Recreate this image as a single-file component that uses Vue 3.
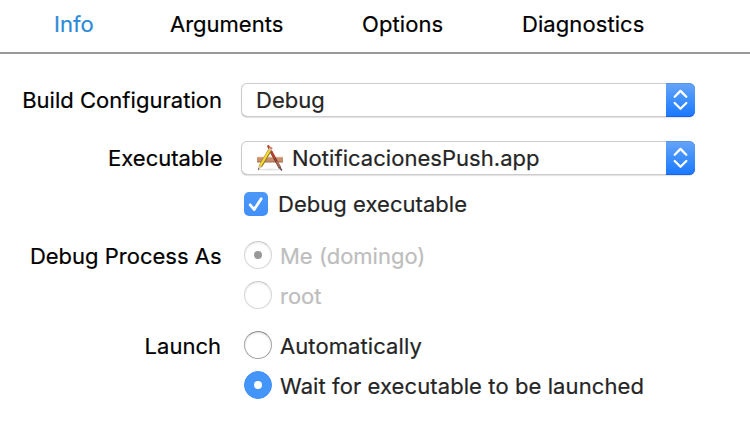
<script setup>
import { ref } from 'vue'

const tabs = ['Info', 'Arguments', 'Options', 'Diagnostics']
const active = ref('Info')
const debugExecutable = ref(true)
const launch = ref('wait')
</script>

<template>
  <main class="panel">
    <nav class="tabs">
      <a v-for="t in tabs" :key="t" class="tab" :class="[t.toLowerCase(), { active: active === t }]" @click="active = t">{{ t }}</a>
    </nav>

    <section class="form">
      <div class="row build">
        <span class="label">Build Configuration</span>
        <div class="select">
          <span class="value">Debug</span>
          <span class="stepper">
            <svg width="29" height="34" viewBox="0 0 29 34"><path d="M8.7 13.7 14.5 7.9 20.3 13.7M8.7 20 14.5 25.8 20.3 20" /></svg>
          </span>
        </div>
      </div>

      <div class="row exec">
        <span class="label">Executable</span>
        <div class="select">
          <svg class="app-icon" width="28" height="28" viewBox="0 0 28 28">
            <ellipse cx="14" cy="25.6" rx="12" ry="1" fill="#e4e4e4" />
            <rect x="1" y="12.9" width="26" height="5.4" fill="#c98f6d" />
            <path d="M1 13.4H27" stroke="#deb090" stroke-width="1" />
            <path d="M1 17.9H27" stroke="#a36c4e" stroke-width=".9" />
            <path d="M13 4 24 24" stroke="#853d30" stroke-width="2.6" />
            <path d="M12.3 2.3 18 12.8" stroke="#b9402d" stroke-width="2.4" stroke-linecap="round" />
            <path d="M20.6 17.5 24.3 24" stroke="#a8715f" stroke-width="1.7" />
            <path d="M23.3 23 25.9 26.4" stroke="#655550" stroke-width="1.7" />
            <path d="M14 6 4.4 22.4" stroke="#8a761d" stroke-width="3.6" />
            <path d="M13.7 6 4.1 22.2" stroke="#f6d935" stroke-width="2.3" />
            <path d="M14.8 4.4 13.6 6.4" stroke="#ccc4bc" stroke-width="3.4" />
            <path d="M15.3 3.2 14.6 4.4" stroke="#d86a5a" stroke-width="3.2" />
            <path d="M2.5 21.2 5.7 23.1 2 26.2Z" fill="#dfc3a0" />
            <path d="M2.3 23.9 3.5 24.7 1.9 26.4Z" fill="#4c4238" />
          </svg>
          <span class="value v-app">NotificacionesPush.app</span>
          <span class="stepper">
            <svg width="29" height="34" viewBox="0 0 29 34"><path d="M8.7 13.7 14.5 7.9 20.3 13.7M8.7 20 14.5 25.8 20.3 20" /></svg>
          </span>
        </div>
      </div>

      <div class="row check">
        <span class="label"></span>
        <div class="choice" @click="debugExecutable = !debugExecutable">
          <span class="checkbox">
            <svg v-if="debugExecutable" width="24" height="24" viewBox="0 0 24 24"><path d="M6.2 12.8 10.2 17.6 17.2 6.8" /></svg>
          </span>
          <span class="text v-check">Debug executable</span>
        </div>
      </div>

      <div class="row me">
        <span class="label">Debug Process As</span>
        <div class="choice disabled">
          <span class="radio selected"></span><span class="text">Me (domingo)</span>
        </div>
      </div>

      <div class="row root">
        <span class="label"></span>
        <div class="choice disabled">
          <span class="radio"></span><span class="text">root</span>
        </div>
      </div>

      <div class="row auto">
        <span class="label">Launch</span>
        <div class="choice" @click="launch = 'auto'">
          <span class="radio" :class="{ selected: launch === 'auto' }"></span><span class="text v-auto">Automatically</span>
        </div>
      </div>

      <div class="row wait">
        <span class="label"></span>
        <div class="choice" @click="launch = 'wait'">
          <span class="radio" :class="{ selected: launch === 'wait' }"></span><span class="text v-wait">Wait for executable to be launched</span>
        </div>
      </div>
    </section>
  </main>
</template>

<style>
body {
  margin: 0;
  background: #fff;
}
</style>

<style scoped>
.panel {
  box-sizing: border-box;
  width: 750px;
  height: 432px;
  overflow: hidden;
  background: #fff;
  color: #000;
  font: 22px/28px Inter, "Liberation Sans", sans-serif;
  -webkit-text-stroke: 0.2px currentColor;
  white-space: nowrap;
}
.tabs {
  display: flex;
  box-sizing: border-box;
  height: 54px;
  padding: 10px 0 0 54px;
  border-bottom: 2px solid #999;
}
.tab { flex: none; }
.tab.info { width: 116px; }
.tab.arguments { width: 192px; }
.tab.options { width: 160px; letter-spacing: 0.1px; }
.tab.diagnostics { letter-spacing: 0.08px; }
.tab.active { color: #2c8ad8; }
.form { padding-top: 29px; }
.row {
  display: grid;
  grid-template-columns: 223px 454px;
  column-gap: 18px;
  align-items: center;
  height: 34px;
}
.exec { margin-top: 24px; }
.check { margin-top: 12px; }
.me { margin-top: 17px; }
.root { margin-top: 6px; }
.auto { margin-top: 16px; }
.wait { margin-top: 6px; }
.label {
  padding-right: 1px;
  text-align: right;
}
.build .label { letter-spacing: 0.03px; }
.exec .label { padding-right: 0.5px; }
.me .label { padding: 2px 1.5px 0 0; }
.auto .label { padding: 2px 2px 0 0; }
.v-app, .v-check { letter-spacing: 0.04px; }
.v-auto, .v-wait { letter-spacing: 0.09px; }
.select {
  display: flex;
  align-items: center;
  box-sizing: border-box;
  height: 34px;
  padding-left: 15px;
  border-radius: 6px;
  background: #fff;
  box-shadow: inset 0 0 0 1px #ccc, inset 0 -1px 0 #b4b4b4, 0 1px 1px #e2e2e2;
  color: #252525;
}
.stepper {
  display: flex;
  width: 29px;
  height: 34px;
  margin-left: auto;
  border-radius: 0 6px 6px 0;
  background: linear-gradient(#68a4f8, #3d8ffb 50%, #1a78ff);
  box-shadow: inset 0 -1px 0 #1763f0, inset 0 1px 0 #5793ec;
}
.stepper path, .checkbox path {
  fill: none;
  stroke: #fff;
  stroke-width: 2.3;
  stroke-linecap: round;
  stroke-linejoin: round;
}
.app-icon { flex: none; margin-right: 8px; }
.choice {
  display: flex;
  align-items: center;
  padding-left: 3px;
  color: #252525;
}
.checkbox {
  display: flex;
  width: 24px;
  height: 24px;
  margin-right: 10px;
  border-radius: 5px;
  background: linear-gradient(#4b98f8, #4090f8);
}
.checkbox path { stroke-width: 2.8; }
.radio {
  display: grid;
  place-items: center;
  box-sizing: border-box;
  width: 28px;
  height: 28px;
  margin-right: 8px;
  border: 1px solid #a6a6a6;
  border-top-color: #8c8c8c;
  border-radius: 50%;
  background: #fff;
  box-shadow: inset 0 1px 2px #ddd;
}
.radio + .text { padding-top: 2px; }
.selected {
  border-color: #4090f8;
  background: #4395fa;
  box-shadow: none;
}
.selected::after {
  content: "";
  width: 8px;
  height: 8px;
  border-radius: 50%;
  background: #fff;
}
.disabled { color: #bdbdbd; }
.disabled .radio {
  border-color: #d6d6d6;
  border-top-color: #c8c8c8;
  background: #fff;
  box-shadow: inset 0 1px 2px #e8e8e8;
}
.disabled .selected::after { background: #999; }
</style>
